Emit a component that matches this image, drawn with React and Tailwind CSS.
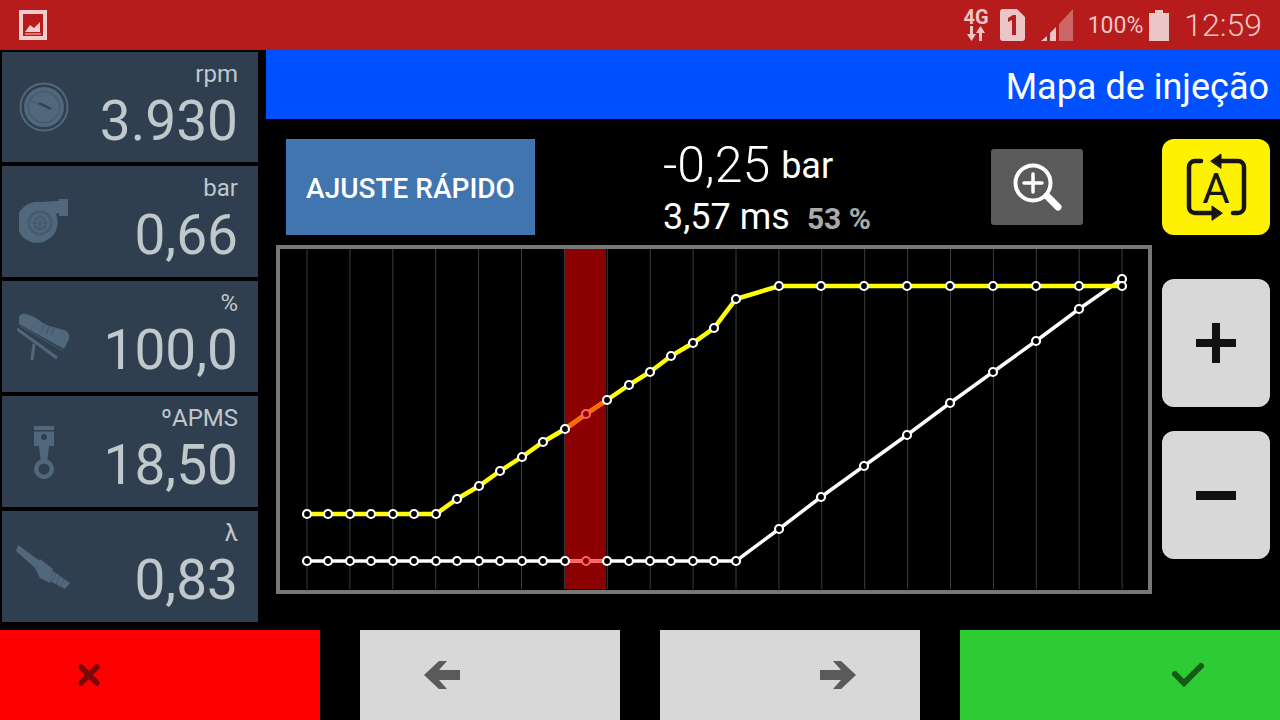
import React from "react";

const yellowPts = [
  [307, 514], [328, 514], [350, 514], [371, 514], [393, 514], [414, 514], [436, 514],
  [457, 499], [479, 486], [500, 471], [522, 457], [543, 442], [565, 429], [586, 414],
  [607, 400], [629, 385], [650, 372], [671, 356], [693, 343], [714, 328], [736, 299],
  [779, 286], [821, 286], [864, 286], [907, 286], [950, 286], [993, 286], [1036, 286],
  [1079, 286], [1122, 286],
];

const whitePts = [
  [307, 561], [328, 561], [350, 561], [371, 561], [393, 561], [414, 561], [436, 561],
  [457, 561], [479, 561], [500, 561], [522, 561], [543, 561], [565, 561], [586, 561],
  [607, 561], [629, 561], [650, 561], [671, 561], [693, 561], [714, 561], [736, 561],
  [779, 529], [821, 497], [864, 466], [907, 435], [950, 403], [993, 372], [1036, 341],
  [1079, 309], [1122, 279],
];

const gridX = Array.from({ length: 20 }, (_, i) => 307 + i * 42.9);
const toLine = (pts) => pts.map((p) => p.join(",")).join(" ");

const GaugeIcon = () => (
  <svg width="52" height="52" viewBox="0 0 52 52" fill="none">
    <circle cx="26" cy="26" r="23.5" stroke="#51677c" strokeWidth="2" />
    <circle cx="26" cy="26" r="20" fill="#51677c" />
    <circle cx="26" cy="26" r="15.5" stroke="#46596d" strokeWidth="1.5" />
    <path d="M13 20 L27 26" stroke="#46596d" strokeWidth="1" />
    <path d="M21 22 L33 28" stroke="#2f3f4f" strokeWidth="2" />
  </svg>
);

const TurboIcon = () => (
  <svg width="50" height="46" viewBox="0 0 50 46" fill="none">
    <path d="M21 3 L40 2 V0 H49 V17 H40 V14 L37 15 A20.5 20.5 0 1 1 21 3 Z" fill="#51677c" />
    <circle cx="21" cy="24" r="12.5" fill="#46596d" />
    <circle cx="21" cy="24" r="10" fill="#51677c" />
    <circle cx="21" cy="24" r="6" stroke="#46596d" strokeWidth="2" />
    <path d="M21 15 V33 M12 24 H30 M15 18 L27 30 M27 18 L15 30" stroke="#46596d" strokeWidth="1" />
  </svg>
);

const PedalIcon = () => (
  <svg width="54" height="48" viewBox="0 0 54 48" fill="none">
    <path d="M0 16 L40 45" stroke="#51677c" strokeWidth="3" />
    <path d="M17 31 L15 47" stroke="#51677c" strokeWidth="3" />
    <path d="M2 4 C3 1 6 0 9 1 L15 3 C22 6 26 11 32 13 L47 17 C52 19 53 23 52 26 L47 36 L2 11 Z" fill="#51677c" />
    <path d="M27 12 L24 19 M32 14 L29 21 M37 15 L34 22" stroke="#46596d" strokeWidth="1.5" />
    <path d="M3 13 L46 38" stroke="#46596d" strokeWidth="1" />
  </svg>
);

const PistonIcon = () => (
  <svg width="22" height="54" viewBox="0 0 22 54" fill="none">
    <path d="M1 1 H21 V5 H1 Z M1 6.5 H21 V21 H1 Z" fill="#51677c" />
    <circle cx="11" cy="12" r="3" fill="#2f3f4f" />
    <path d="M6 21 H16 L14 38 H8 Z" fill="#51677c" />
    <circle cx="11" cy="44" r="7.8" stroke="#51677c" strokeWidth="4.5" />
  </svg>
);

const SensorIcon = () => (
  <svg width="56" height="46" viewBox="0 0 56 46" fill="none">
    <path d="M2 1 L0 7 L19 24 L24 17 Z" fill="#51677c" />
    <path d="M24 15 L37 25 L34 39 L24 34 L19 24 Z" fill="#51677c" />
    <path d="M37 27 L54 39 L49 45 L34 37 Z" fill="#51677c" />
    <path d="M40 29 L36 37 M44 32 L40 40 M48 35 L44 43" stroke="#46596d" strokeWidth="1" />
  </svg>
);

const StatCard = ({ icon, unit, value }) => (
  <div className="flex-1 flex items-center bg-[#2f3f4f]">
    <div className="w-[84px] flex justify-center shrink-0">{icon}</div>
    <div className="flex-1 self-stretch flex flex-col items-end pt-[10px] pr-5 text-[#c1c8cc]">
      <span className="text-[24px] leading-[24px]">{unit}</span>
      <span className="text-[55px] leading-[50px] mt-[10px]">{value}</span>
    </div>
  </div>
);

const StatusBar = () => (
  <div className="h-[50px] bg-[#b71c1c] flex items-center shrink-0 text-[#ecc6c6]">
    <svg className="ml-[19px]" width="28" height="30" viewBox="0 0 28 30" fill="none">
      <path d="M0 0 H28 V30 H0 Z M4 4 V26 H24 V4 Z" fill="#f0cccc" fillRule="evenodd" />
      <path d="M6 22 L11 15 L15 18 L21 12 V22 Z" fill="#f0cccc" />
      <path d="M6 24 H22" stroke="#f0cccc" strokeWidth="1" />
    </svg>
    <div className="ml-auto flex items-center">
      <div className="flex flex-col items-center w-[25px]">
        <span className="text-[20px] leading-[16px] font-bold">4G</span>
        <svg className="mt-[1px]" width="20" height="15" viewBox="0 0 20 15" fill="#ecc6c6">
          <path d="M4 0 H7 V8 H10 L5.5 15 L1 8 H4 Z M13 15 H16 V7 H19 L14.5 0 L10 7 H13 Z" />
        </svg>
      </div>
      <svg className="ml-[11px]" width="25" height="32" viewBox="0 0 25 32">
        <path d="M3 0 H17 L25 8 V29 A3 3 0 0 1 22 32 H3 A3 3 0 0 1 0 29 V3 A3 3 0 0 1 3 0 Z" fill="#ecc6c6" />
        <path d="M8 9 L13 6 H16 V26 H12 V11 L8 13 Z" fill="#b71c1c" />
      </svg>
      <svg className="ml-[16px]" width="32" height="32" viewBox="0 0 32 32">
        <path d="M0 32 L6 27 V32 Z M9 32 V24 L15 18 V32 Z" fill="#ecc6c6" />
        <path d="M18 32 V15 L32 0 V32 Z" fill="#cd6767" />
      </svg>
      <span className="ml-[15px] text-[23px] leading-none">100%</span>
      <svg className="ml-[6px]" width="20" height="31" viewBox="0 0 20 31">
        <path d="M6 0 H14 V3 H20 V31 H0 V3 H6 Z" fill="#ecc6c6" />
      </svg>
      <span className="ml-[15px] mr-[18px] text-[32px] leading-none font-light">12:59</span>
    </div>
  </div>
);

const InjectionChart = () => (
  <div className="ml-[10px] mt-[10px] w-[876px] h-[349px] border-4 border-[#777777] bg-black">
    <svg width="868" height="341" viewBox="280 249 868 341" className="block">
      <defs>
        <clipPath id="hl">
          <rect x="565" y="249" width="41" height="341" />
        </clipPath>
      </defs>
      {gridX.map((x) => (
        <line key={x} x1={x} x2={x} y1="249" y2="589" stroke="#3d3d3d" strokeWidth="1" />
      ))}
      <rect x="565" y="249" width="41" height="340" fill="#8b0000" />
      <polyline points={toLine(whitePts)} fill="none" stroke="#ffffff" strokeWidth="3.5" />
      <polyline points={toLine(yellowPts)} fill="none" stroke="#ffff00" strokeWidth="4.5" />
      <g clipPath="url(#hl)">
        <polyline points={toLine(whitePts)} fill="none" stroke="#ff6060" strokeWidth="3.5" />
        <polyline points={toLine(yellowPts)} fill="none" stroke="#ff6a00" strokeWidth="4.5" />
      </g>
      {[...whitePts, ...yellowPts].map(([x, y], i) => {
        const active = x === 586;
        return (
          <circle
            key={i}
            cx={x}
            cy={y}
            r="4"
            fill={active ? "#8b0000" : "#000000"}
            stroke={active ? "#ff6060" : "#ffffff"}
            strokeWidth="2.2"
          />
        );
      })}
    </svg>
  </div>
);

export default function App() {
  return (
    <div className="w-[1280px] h-[720px] bg-black flex flex-col overflow-hidden font-['Roboto',sans-serif]">
      <StatusBar />

      <div className="flex-1 flex min-h-0">
        <div className="w-[266px] shrink-0 flex flex-col gap-1 pl-[2px] pr-2 pt-[1.5px] pb-[7.9px]">
          <StatCard icon={<GaugeIcon />} unit="rpm" value="3.930" />
          <StatCard icon={<TurboIcon />} unit="bar" value="0,66" />
          <StatCard icon={<PedalIcon />} unit="%" value="100,0" />
          <StatCard icon={<PistonIcon />} unit="ºAPMS" value="18,50" />
          <StatCard icon={<SensorIcon />} unit="λ" value="0,83" />
        </div>

        <div className="flex-1 flex flex-col">
          <div className="h-[69px] bg-[#0050ff] flex items-center justify-end pr-[11px] pt-[4px] shrink-0">
            <span className="text-white text-[36px] leading-none">Mapa de injeção</span>
          </div>

          <div className="flex-1 flex">
            <div className="w-[896px] pt-5">
              <div className="flex h-[96px] pl-5">
                <button className="w-[249px] h-[96px] pt-[3px] bg-[#4075b0] text-white text-[28px] font-medium">
                  AJUSTE RÁPIDO
                </button>
                <div className="w-[456px] pl-[128px] text-white">
                  <div className="flex items-center h-[52px]">
                    <span className="text-[50px] leading-[52px] font-light">-0,25</span>
                    <span className="text-[36px] leading-[40px] ml-[11px] mt-[1px]">bar</span>
                  </div>
                  <div className="flex items-baseline mt-[5px]">
                    <span className="text-[36px] leading-[42px]">3,57 ms</span>
                    <span className="text-[30px] leading-[32px] font-bold text-[#aaaaaa] ml-[17px]">53 %</span>
                  </div>
                </div>
                <div className="mt-[10px] w-[92px] h-[76px] rounded-[3px] bg-[#5a5a5a] flex items-center justify-center">
                  <svg width="52" height="52" viewBox="0 0 52 52" fill="none" stroke="#ffffff" strokeLinecap="round">
                    <circle cx="22" cy="22" r="17.5" strokeWidth="4" />
                    <path d="M22 13 V31 M13 22 H31" strokeWidth="3.5" />
                    <path d="M36 35 L47 46" strokeWidth="7" />
                  </svg>
                </div>
              </div>
              <InjectionChart />
            </div>

            <div className="w-[108px] pt-5 flex flex-col">
              <div className="h-[96px] rounded-xl bg-[#fff200]">
                <svg className="block" width="108" height="96" viewBox="0 0 108 96" fill="none" stroke="#151515" strokeWidth="4.5" strokeLinecap="round" strokeLinejoin="round">
                  <path d="M39 22 H33 A6 6 0 0 0 27 28 V68 A6 6 0 0 0 33 74 H52" />
                  <path d="M54 22 H76 A6 6 0 0 1 82 28 V68 A6 6 0 0 1 76 74 H71" />
                  <path d="M49 22 L59 15 V29 Z M60 74 L50 67 V81 Z" fill="#151515" strokeWidth="1" />
                  <text x="54" y="64" textAnchor="middle" fontSize="42" fontFamily="Roboto" fontWeight="400" fill="#151515" stroke="none">A</text>
                </svg>
              </div>
              <div className="mt-11 h-[128px] rounded-xl bg-[#d8d8d8] flex items-center justify-center">
                <svg width="42" height="42" viewBox="0 0 42 42">
                  <path d="M17 1 H25 V17 H41 V25 H25 V41 H17 V25 H1 V17 H17 Z" fill="#111111" />
                </svg>
              </div>
              <div className="mt-6 h-[128px] rounded-xl bg-[#d8d8d8] flex items-center justify-center">
                <svg width="42" height="9" viewBox="0 0 42 9">
                  <rect x="1" y="0" width="40" height="9" fill="#111111" />
                </svg>
              </div>
            </div>
          </div>
        </div>
      </div>

      <div className="h-[90px] shrink-0 flex">
        <button className="w-[320px] bg-[#ff0000] flex items-center pl-[77px]">
          <svg width="24" height="24" viewBox="0 0 24 24" stroke="#7a0808" strokeWidth="5.5" strokeLinecap="round">
            <path d="M4 4 L20 20 M20 4 L4 20" />
          </svg>
        </button>
        <button className="ml-10 w-[260px] bg-[#d8d8d8] flex items-center pl-[64px]">
          <svg width="36" height="28" viewBox="0 0 36 28" fill="#5a5a5a">
            <path d="M0 14 L15 0 H23 L15 9 H36 V19 H15 L23 28 H15 Z" />
          </svg>
        </button>
        <button className="ml-10 w-[260px] bg-[#d8d8d8] flex items-center pl-[160px]">
          <svg width="36" height="28" viewBox="0 0 36 28" fill="#5a5a5a">
            <path d="M36 14 L21 0 H13 L21 9 H0 V19 H21 L13 28 H21 Z" />
          </svg>
        </button>
        <button className="ml-10 w-[320px] bg-[#2ecc34] flex items-center pl-[212px]">
          <svg width="32" height="26" viewBox="0 0 32 26" fill="none" stroke="#155a18" strokeWidth="6" strokeLinecap="round">
            <path d="M3 12 L12 21 L29 4" />
          </svg>
        </button>
      </div>
    </div>
  );
}
